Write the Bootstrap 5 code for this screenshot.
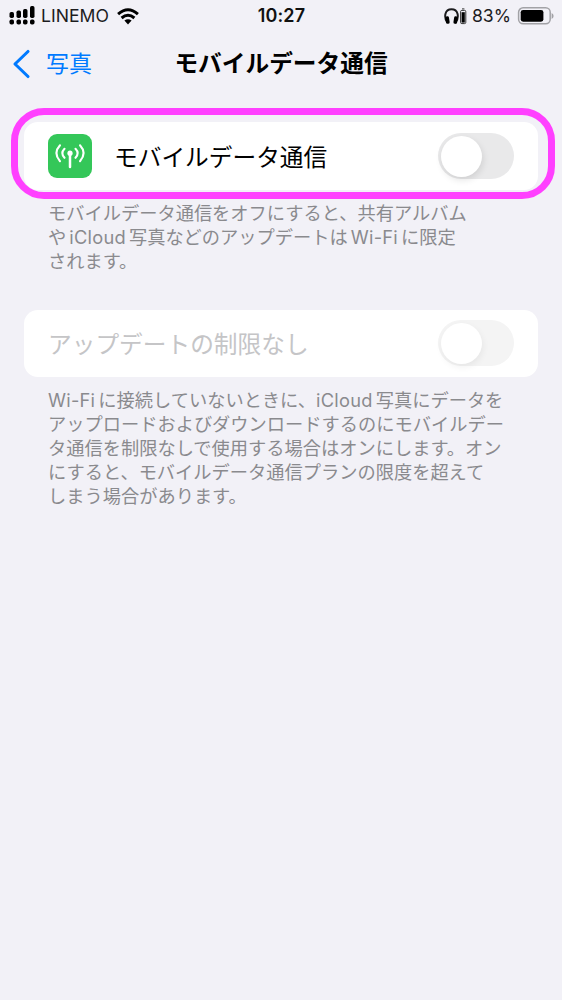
<!DOCTYPE html>
<html lang="ja">
<head>
<meta charset="utf-8">
<meta name="viewport" content="width=device-width, initial-scale=1">
<title>モバイルデータ通信</title>
<link href="https://cdn.jsdelivr.net/npm/bootstrap@5.3.0/dist/css/bootstrap.min.css" rel="stylesheet">
<script src="https://cdn.jsdelivr.net/npm/bootstrap@5.3.0/dist/js/bootstrap.bundle.min.js"></script>
<style>
  body { background: #f2f1f7; color: #000; font-family: Inter, "Noto Sans CJK JP", sans-serif; min-height: 1000px; overflow: hidden; }
  svg { display: block; flex: none; }
  .status-bar { height: 32px; padding: 0 8px 0 9px; font-size: 18px; line-height: 32px; color: #1c1c1e; }
  .status-bar .clock { font-weight: 600; letter-spacing: .1px; color: #111; }
  .carrier { font-size: 17.6px; margin-left: 6px; }
  .wifi { margin-left: 8px; }
  .percent { font-size: 17.6px; margin: 0 6px 0 5px; }
  .title-bar { height: 63px; padding: 0 13px; }
  .title-bar h1 { font-size: 23.7px; line-height: 36px; font-weight: 700; margin: 0; padding-top: 1px; }
  .back-link { color: #007aff; font-size: 23px; line-height: 36px; }
  .back-link span { margin-left: 15px; }
  .back-link svg { margin-left: -1px; }
  .settings { padding: 27px 24px 0; }
  .setting-row { height: 68px; padding: 0 24px; border: 0; border-radius: 14px; background: #fff; font-size: 23.7px; color: #000; }
  .setting-label { padding-top: 4px; }
  .setting-row.is-disabled { height: 67px; color: #c5c5c7; }
  .is-disabled .setting-label { padding-top: 2px; }
  .is-disabled .toggle { margin-bottom: 1px !important; }
  .app-icon { width: 44px; height: 44px; border-radius: 9px; background: #34c759; margin-right: 22px; }
  .note { font-size: 18.24px; line-height: 24px; color: #8a8a8e; padding: 11px 0 0 24px; margin: 0; white-space: nowrap; }
  .latin { letter-spacing: .27px; margin: 0 3px; }
  .latin-tight { margin-left: 0; }
  .second-group { margin-top: 37px; }
  .form-check-input.toggle { width: 76px; height: 46px; margin-top: 0; margin-bottom: 0; border: 0; border-radius: 23px; background: #e9e9ea; box-shadow: none; appearance: none; }
  .toggle::before { content: ""; display: block; width: 41px; height: 41px; margin: 2.5px; border-radius: 50%; background: #fff; box-shadow: 1px 3px 7px rgba(0,0,0,.11); }
  .form-check-input.toggle:disabled { opacity: 1; background: #f4f4f4; }
  .toggle:disabled::before { box-shadow: 1px 3px 7px rgba(0,0,0,.06); }
  .highlight { inset: -14px -17px -9px -13px; border: 7px solid #ff40ff; border-radius: 33px; pointer-events: none; }
</style>
</head>
<body>
<header>
  <div class="status-bar row g-0 align-items-center">
    <div class="col d-flex align-items-center">
      <svg width="26" height="20" viewBox="0 0 26 20"><g fill="#000"><rect x=".5" y="6" width="4.5" height="6" rx="1.7"/><rect x="7.5" y="4.5" width="4.5" height="7.5" rx="1.7"/><rect x="14" y="3" width="4.5" height="9" rx="1.7"/><rect x="21" y="0" width="4.5" height="12" rx="1.7"/><rect x=".5" y="13.5" width="4.5" height="5" rx="1.8"/><rect x="7.5" y="13.5" width="4.5" height="5" rx="1.8"/><rect x="14" y="13.5" width="4.5" height="5" rx="1.8"/><rect x="21" y="13.5" width="4.5" height="5" rx="1.8"/></g></svg>
      <span class="carrier">LINEMO</span>
      <svg class="wifi" width="22" height="17" viewBox="0 0 22 17"><g fill="none" stroke="#000" stroke-width="3"><path d="M1.1 6.1Q11-2.5 20.9 6.1"/><path d="M4.6 10Q11 4.4 17.4 10"/></g><path d="M7.4 12.6Q11 9.8 14.6 12.6L11 16.4Z"/></svg>
    </div>
    <div class="col-auto clock">10:27</div>
    <div class="col d-flex align-items-center justify-content-end">
      <svg width="23" height="17" viewBox="0 0 23 17"><path d="M3.2 14C-.3 9 .7 1.3 7.5 1.3S15.3 9 11.8 14" fill="none" stroke="#1c1c1e" stroke-width="2"/><rect x="1.6" y="8.4" width="3.7" height="7.5" rx="1.5" transform="rotate(-9 3 12)"/><rect x="9.8" y="8.4" width="3.7" height="7.5" rx="1.5" transform="rotate(9 12 12)"/><rect x="16.6" y="2.4" width="5.2" height="13.2" rx="1.2" fill="none" stroke="#333"/><rect x="17.6" y="4.2" width="3.2" height="10.4"/><path d="M18 .9h2.4" stroke="#333"/></svg>
      <span class="percent">83%</span>
      <svg width="37" height="18" viewBox="0 0 37 18"><rect x="1.6" y=".8" width="31.6" height="16" rx="4.5" fill="none" stroke="#a2a2a6" stroke-width="1.5"/><rect x="3.7" y="2.9" width="22.7" height="11.8" rx="2.4"/><path d="M34.6 6q2 1 2 3T34.6 12Z" fill="#a2a2a6"/></svg>
    </div>
  </div>
  <nav class="title-bar row g-0 align-items-center">
    <a class="back-link col d-flex align-items-center text-decoration-none" href="#"><svg width="19" height="30" viewBox="0 0 19 30"><path d="M16 2.5 3 15 16 27.5" fill="none" stroke="#007aff" stroke-width="3.1" stroke-linecap="round" stroke-linejoin="round"/></svg><span>写真</span></a>
    <h1 class="col-auto">モバイルデータ通信</h1>
    <div class="col"></div>
  </nav>
</header>
<main class="settings">
  <section>
    <div class="setting-row card flex-row align-items-center">
      <span class="app-icon"><svg width="44" height="44" viewBox="0 0 44 44"><g fill="none" stroke="#fff" stroke-width="2.1" stroke-linecap="round"><path d="M22 20V33" stroke-width="2.5"/><path d="M16.5 14.8Q12.2 19.2 16.5 23.8M27.5 14.8Q31.8 19.2 27.5 23.8M12 11.3Q4.8 19.2 12 27.2M32 11.3Q39.2 19.2 32 27.2"/></g><circle cx="22" cy="19.2" r="2.6" fill="#fff"/></svg></span>
      <span class="setting-label">モバイルデータ通信</span>
      <input class="form-check-input toggle ms-auto" type="checkbox" role="switch" aria-label="モバイルデータ通信">
      <div class="highlight position-absolute"></div>
    </div>
    <p class="note">モバイルデータ通信をオフにすると、共有アルバム<br>や<span class="latin">iCloud</span>写真などのアップデートは<span class="latin">Wi-Fi</span>に限定<br>されます。</p>
  </section>
  <section class="second-group">
    <div class="setting-row is-disabled card flex-row align-items-center">
      <span class="setting-label">アップデートの制限なし</span>
      <input class="form-check-input toggle ms-auto" type="checkbox" role="switch" disabled aria-label="アップデートの制限なし">
    </div>
    <p class="note"><span class="latin latin-tight">Wi-Fi</span>に接続していないときに、<span class="latin latin-tight">iCloud</span>写真にデータを<br>アップロードおよびダウンロードするのにモバイルデー<br>タ通信を制限なしで使用する場合はオンにします。オン<br>にすると、モバイルデータ通信プランの限度を超えて<br>しまう場合があります。</p>
  </section>
</main>
</body>
</html>
